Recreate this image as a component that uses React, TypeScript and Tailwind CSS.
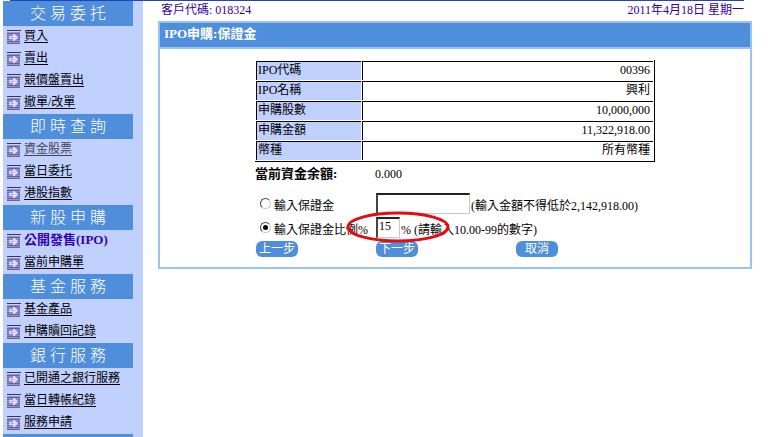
import { useState } from "react";
import clsx from "clsx";

interface MenuItem {
  label: string;
  active?: boolean;
  muted?: boolean;
}

interface MenuGroup {
  title: string;
  items: MenuItem[];
}

const menu: MenuGroup[] = [
  {
    title: "交 易 委 托",
    items: [
      { label: "買入" },
      { label: "賣出" },
      { label: "競價盤賣出" },
      { label: "撤單/改單" },
    ],
  },
  {
    title: "即 時 查 詢",
    items: [
      { label: "資金股票", muted: true },
      { label: "當日委托" },
      { label: "港股指數" },
    ],
  },
  {
    title: "新 股 申 購",
    items: [{ label: "公開發售(IPO)", active: true }, { label: "當前申購單" }],
  },
  {
    title: "基 金 服 務",
    items: [{ label: "基金產品" }, { label: "申購贖回記錄" }],
  },
  {
    title: "銀 行 服 務",
    items: [
      { label: "已開通之銀行服務" },
      { label: "當日轉帳紀錄" },
      { label: "服務申請" },
    ],
  },
];

const details = [
  ["IPO代碼", "00396"],
  ["IPO名稱", "興利"],
  ["申購股數", "10,000,000"],
  ["申購金額", "11,322,918.00"],
  ["幣種", "所有幣種"],
];

function MenuIcon() {
  return (
    <svg
      width="14"
      height="14"
      viewBox="0 0 14 14"
      shapeRendering="crispEdges"
      className="shrink-0"
      aria-hidden="true"
    >
      <path fill="#9593cc" d="M0 2h13v12H0z" />
      <path
        fill="#66639f"
        d="M0 3h13v1H0zM0 5h13v1H0zM0 7h13v1H0zM0 9h13v1H0zM0 11h13v1H0zM0 13h13v1H0z"
      />
      <path fill="#34346c" d="M0 0h14v1H0z" />
      <path fill="#8f8cc6" d="M2 4h9v7H2z" />
      <path fill="#dcdaff" d="M2 6h4V4h2v1h1v1h1v1h1v1h-1v1H9v1H8v1H6V9H2z" />
      <path fill="#aeabdf" d="M3 7h4v1H3z" />
    </svg>
  );
}

function Sidebar() {
  return (
    <nav className="w-[140px] shrink-0 bg-[#c0d0ff]">
      {menu.map((group) => (
        <section key={group.title}>
          <h2 className="mr-[10px] h-[25px] bg-[#4f8edb] text-center text-[16px] leading-[25px] font-light text-white">
            {group.title}
          </h2>
          <ul>
            {group.items.map((item) => (
              <li key={item.label} className="flex h-[22px] items-center gap-[3px] pl-1">
                <MenuIcon />
                <a
                  href="#"
                  className={clsx(
                    "pb-0.5 whitespace-nowrap",
                    item.active
                      ? "text-[13px] font-bold text-[#3300b0]"
                      : "underline underline-offset-2",
                    item.muted && "text-[#444455]",
                  )}
                >
                  {item.label}
                </a>
              </li>
            ))}
          </ul>
        </section>
      ))}
      <div className="mr-[10px] h-[25px] bg-[#4f8edb]" />
    </nav>
  );
}

function DetailsTable() {
  return (
    <table className="w-full table-fixed border-separate border-spacing-px border-r border-b border-black">
      <tbody>
        {details.map(([name, value]) => (
          <tr key={name} className="h-[19px]">
            <th className="w-[105px] border-t border-l border-black bg-[#c0d0ff] px-px pt-0 pb-0.5 text-left leading-4 font-normal">
              {name}
            </th>
            <td className="border-t border-l border-black px-[3px] pt-0 pb-0.5 text-right leading-4">
              {value}
            </td>
          </tr>
        ))}
      </tbody>
    </table>
  );
}

interface RadioProps {
  id: string;
  label: string;
  checked: boolean;
  onChange: () => void;
}

function Radio({ id, label, checked, onChange }: RadioProps) {
  return (
    <div className="flex gap-[3px] pt-[5px] pl-1">
      <input
        type="radio"
        id={id}
        name="deposit"
        checked={checked}
        onChange={onChange}
        className="grid size-[11px] appearance-none place-items-center rounded-full border border-[#444] border-r-[#c8c8c8] border-b-[#c8c8c8] bg-white before:size-[5px] before:rounded-full checked:before:bg-black"
      />
      <label htmlFor={id} className="whitespace-nowrap">
        {label}
      </label>
    </div>
  );
}

const inputStyle =
  "h-[21px] border border-t-2 border-l-2 border-[#c8c8c8] border-t-[#222] border-l-[#444] bg-white px-px pb-[3px] outline-none";

const buttonStyle =
  "h-4 w-[42px] rounded-md bg-[#4f8edb] text-center leading-4 text-white";

function DepositForm() {
  const [mode, setMode] = useState("ratio");
  const [amount, setAmount] = useState("");
  const [ratio, setRatio] = useState("15");

  return (
    <form className="relative" onSubmit={(e) => e.preventDefault()}>
      <div className="grid h-6 grid-cols-[120px_1fr] items-center">
        <b className="text-[13px]">當前資金余額:</b>
        <span>0.000</span>
      </div>
      <div className="mt-[7px] pl-px">
        <div className="grid h-6 grid-cols-[120px_1fr]">
          <Radio
            id="by-amount"
            label="輸入保證金"
            checked={mode === "amount"}
            onChange={() => setMode("amount")}
          />
          <div className="flex items-start gap-px">
            <input
              aria-label="輸入保證金"
              value={amount}
              onChange={(e) => setAmount(e.target.value)}
              className={clsx(inputStyle, "w-[94px]")}
            />
            <span className="pt-[5px] whitespace-nowrap">
              (輸入金額不得低於2,142,918.00)
            </span>
          </div>
        </div>
        <div className="grid h-6 grid-cols-[120px_1fr]">
          <Radio
            id="by-ratio"
            label="輸入保證金比例%"
            checked={mode === "ratio"}
            onChange={() => setMode("ratio")}
          />
          <div className="flex items-start gap-px">
            <input
              aria-label="輸入保證金比例%"
              value={ratio}
              onChange={(e) => setRatio(e.target.value)}
              className={clsx(inputStyle, "w-6")}
            />
            <span className="pt-[5px] whitespace-nowrap">% (請輸入10.00-99的數字)</span>
          </div>
        </div>
        <div className="grid grid-cols-[120px_140px_1fr]">
          <button type="button" className={buttonStyle}>
            上一步
          </button>
          <button type="submit" className={buttonStyle}>
            下一步
          </button>
          <button type="button" className={buttonStyle}>
            取消
          </button>
        </div>
      </div>
      {/* hand-marked highlight round the ratio box */}
      <svg
        width="106"
        height="34"
        viewBox="0 0 106 34"
        className="pointer-events-none absolute top-12 left-[90px]"
        aria-hidden="true"
      >
        <ellipse
          cx="53"
          cy="17"
          rx="50"
          ry="14"
          fill="none"
          stroke="#e00d12"
          strokeWidth="3"
        />
      </svg>
    </form>
  );
}

export default function App() {
  return (
    <div className="h-screen overflow-hidden bg-white font-['Liberation_Serif','Noto_Sans_CJK_TC',serif] text-[12px] leading-4 text-black">
      <div className="mr-[30px] ml-[10px] h-px bg-[#2444b8]" />
      <div className="flex pl-[3px]">
        <Sidebar />
        <main className="min-w-0 flex-1 pr-[22px] pl-[15px]">
          <header className="flex h-5 justify-between pr-2 pl-[3px] leading-[18px] text-[#330099]">
            <span>客戶代碼: 018324</span>
            <span>2011年4月18日 星期一</span>
          </header>
          <section className="border-2 border-[#98c4f4]">
            <h1 className="h-[26px] border-b-2 border-[#98c4f4] bg-[#4f8edb] pl-1 text-[13px] leading-[22px] font-bold text-white">
              IPO申購:保證金
            </h1>
            <div className="mx-auto max-w-[400px] pt-[11px] pb-[10px]">
              <DetailsTable />
              <DepositForm />
            </div>
          </section>
        </main>
      </div>
    </div>
  );
}
